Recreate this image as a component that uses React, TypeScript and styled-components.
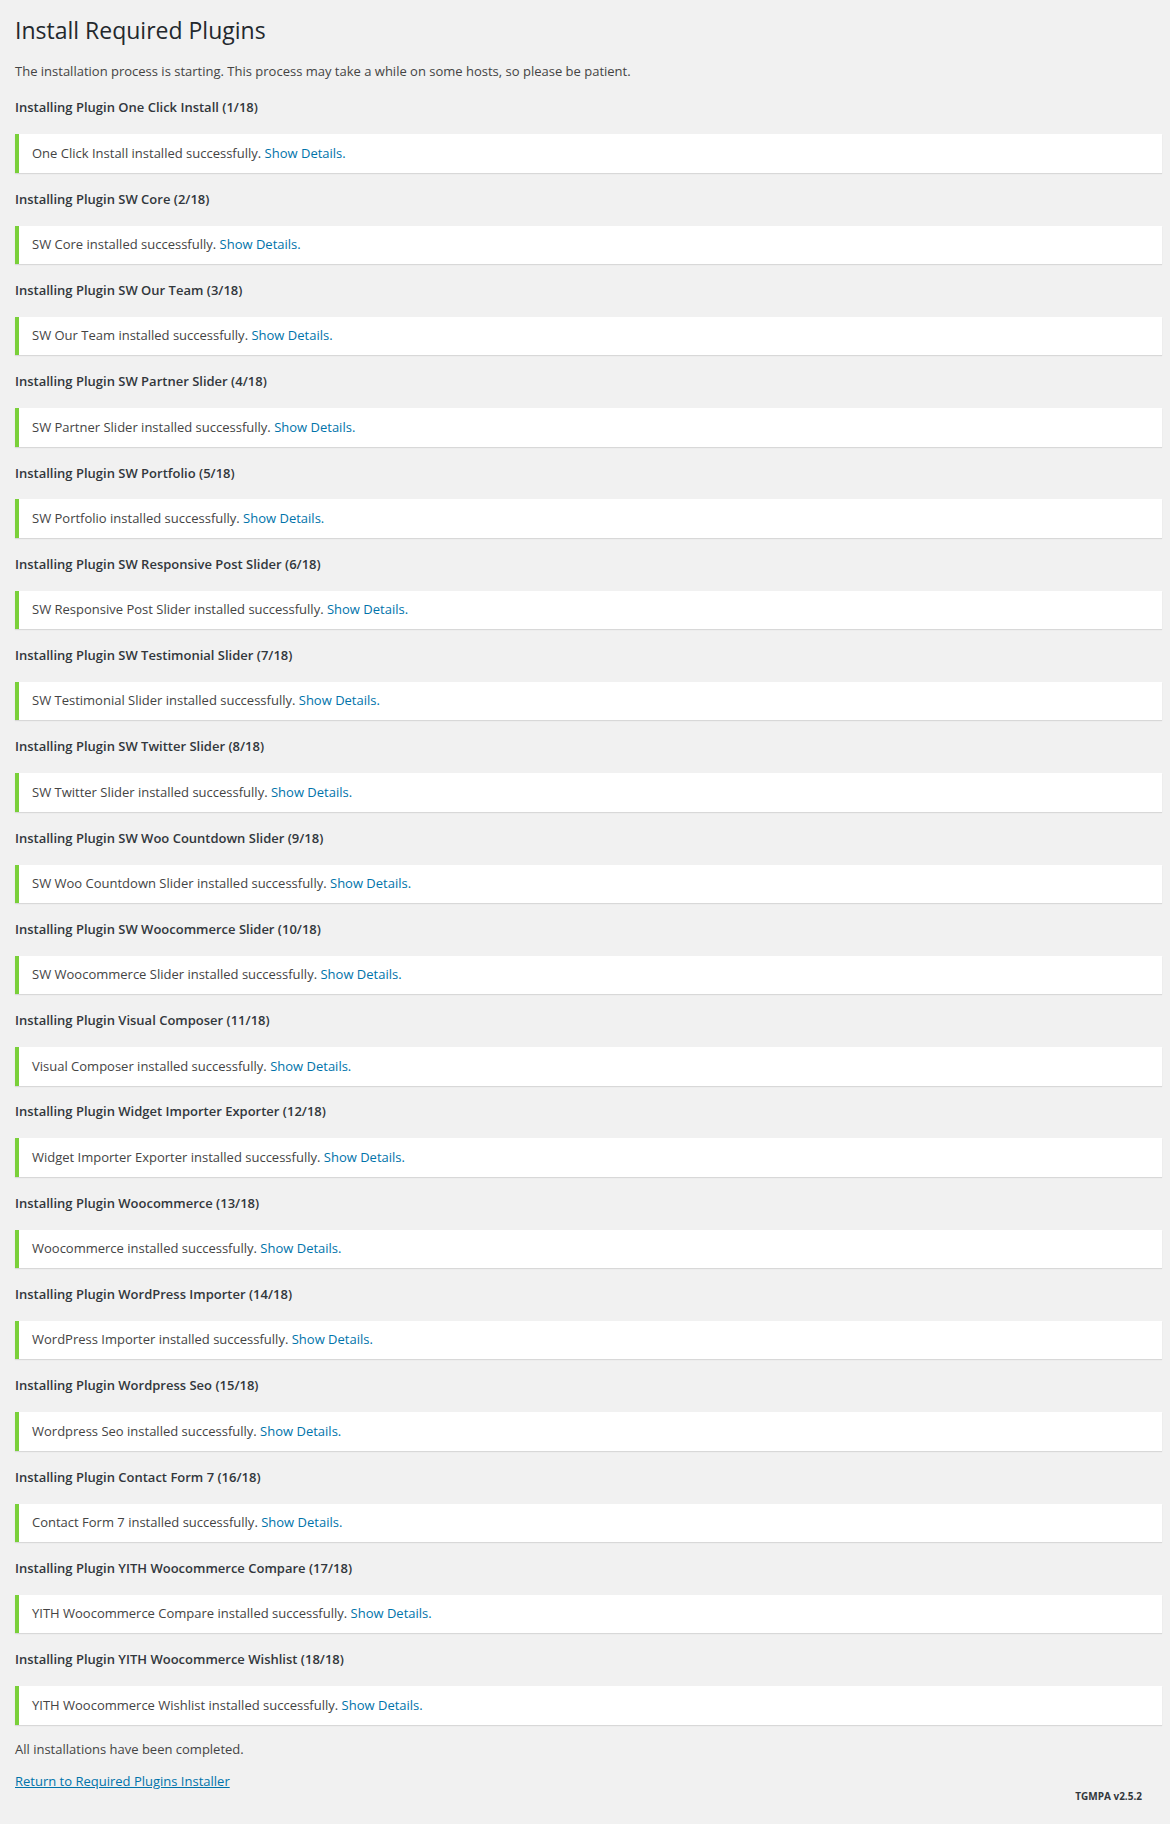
import React from 'react';
import styled, { createGlobalStyle } from 'styled-components';

const plugins = [
  'One Click Install',
  'SW Core',
  'SW Our Team',
  'SW Partner Slider',
  'SW Portfolio',
  'SW Responsive Post Slider',
  'SW Testimonial Slider',
  'SW Twitter Slider',
  'SW Woo Countdown Slider',
  'SW Woocommerce Slider',
  'Visual Composer',
  'Widget Importer Exporter',
  'Woocommerce',
  'WordPress Importer',
  'Wordpress Seo',
  'Contact Form 7',
  'YITH Woocommerce Compare',
  'YITH Woocommerce Wishlist',
];

const GlobalStyle = createGlobalStyle`
  html, body {
    margin: 0;
    padding: 0;
    background: #f1f1f1;
  }
  body {
    font-family: "Open Sans", "Liberation Sans", sans-serif;
    font-size: 13px;
    line-height: 1.5;
    color: #444;
  }
`;

export default function App() {
  return (
    <>
      <GlobalStyle />
      <Wrap>
        <Title>Install Required Plugins</Title>
        <Paragraph>
          The installation process is starting. This process may take a while
          on some hosts, so please be patient.
        </Paragraph>
        {plugins.map((name, i) => (
          <PluginStep key={name}>
            <StepHeading>
              Installing Plugin {name} ({i + 1}/{plugins.length})
            </StepHeading>
            <Notice>
              <NoticeText>
                {name} installed successfully.{' '}
                <DetailsLink href="#">Show Details.</DetailsLink>
              </NoticeText>
            </Notice>
          </PluginStep>
        ))}
        <Paragraph>All installations have been completed.</Paragraph>
        <Paragraph>
          <ReturnLink href="#">Return to Required Plugins Installer</ReturnLink>
        </Paragraph>
        <Version>TGMPA v2.5.2</Version>
      </Wrap>
    </>
  );
}

const Wrap = styled.div`
  padding: 7px 8px 20px 15px;
`;

const Title = styled.h1`
  margin: 0;
  padding: 9px 15px 4px 0;
  font-size: 23px;
  font-weight: 400;
  line-height: 29px;
  color: #23282d;
`;

const Paragraph = styled.p`
  margin: 13px 0;
  font-size: 13px;
  line-height: 1.5;
  color: #444;
`;

const PluginStep = styled.div`
  margin-top: 16.9px;
`;

const StepHeading = styled.h2`
  margin: 0 0 17.7px;
  font-size: 13px;
  font-weight: 600;
  line-height: 18.2px;
  color: #32373c;
`;

const Notice = styled.div`
  background: #fff;
  border-left: 4px solid #7ad03a;
  box-shadow: 0 1px 1px 0 rgba(0, 0, 0, 0.1);
  padding: 1px 13px;
  margin: 0 0 15px;
`;

const NoticeText = styled.p`
  margin: 6.5px 0;
  padding: 2px 0;
  font-size: 13px;
  line-height: 1.5;
  color: #444;
`;

const DetailsLink = styled.a`
  color: #0073aa;
  text-decoration: none;
`;

const ReturnLink = styled.a`
  color: #0073aa;
  text-decoration: underline;
`;

const Version = styled.p`
  margin: -16px 0 0;
  padding-right: 20px;
  text-align: right;
  font-size: 10px;
  font-weight: 700;
  line-height: 1.5;
  color: #32373c;
`;
